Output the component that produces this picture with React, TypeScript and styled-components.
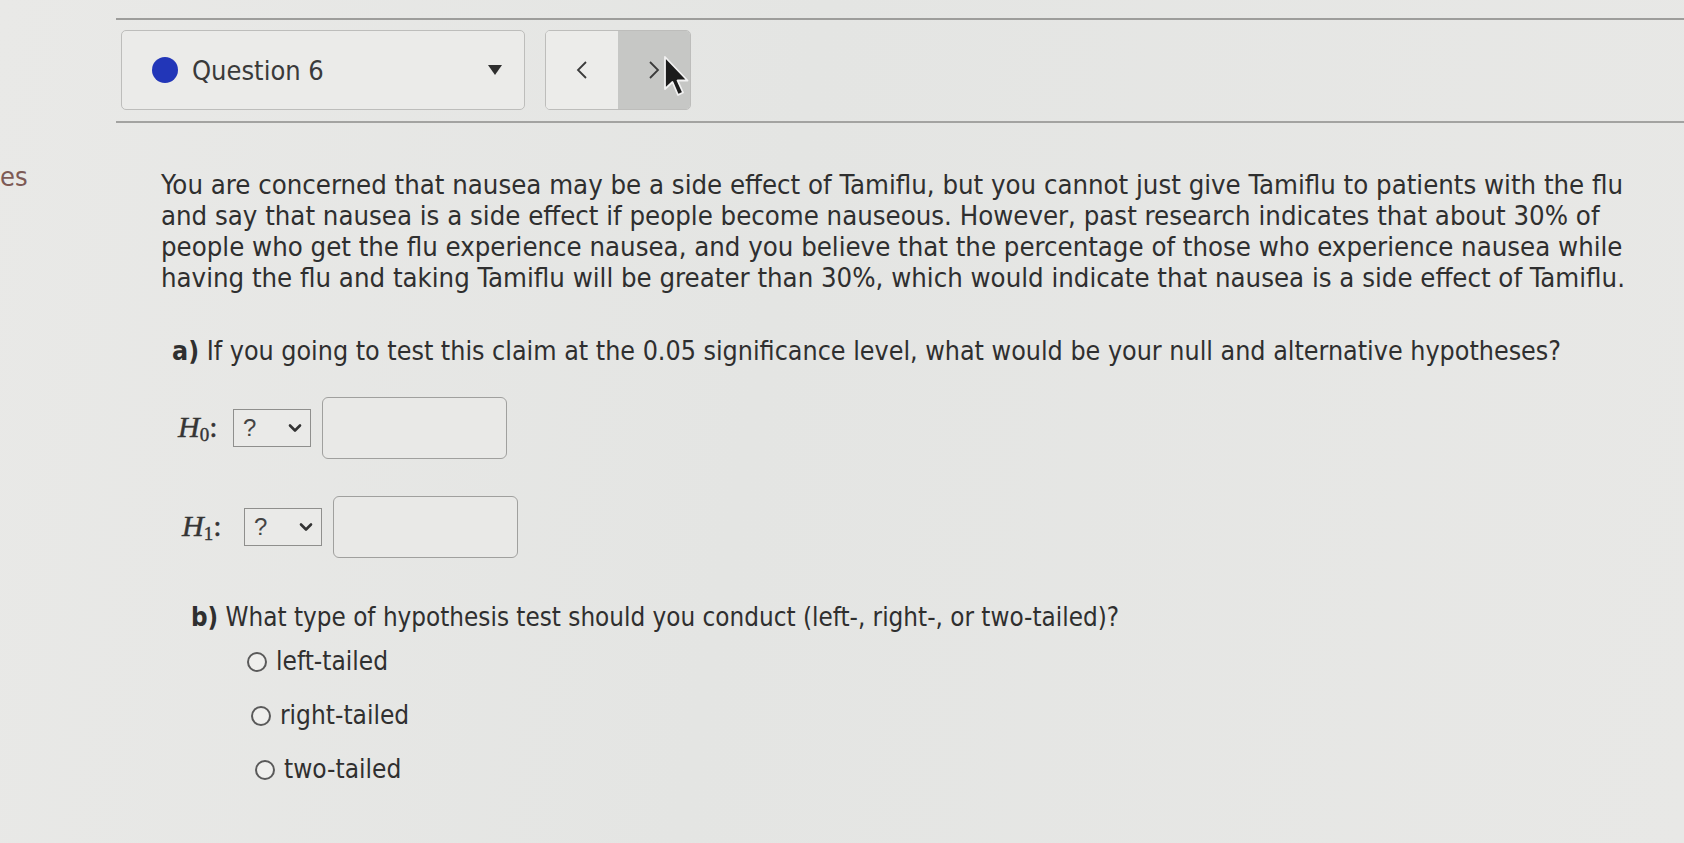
import React from 'react'
import styled, { createGlobalStyle } from 'styled-components'

const GlobalStyle = createGlobalStyle`
  html, body {
    margin: 0;
    padding: 0;
    background: #e7e7e5;
  }
  body {
    font-family: "DejaVu Sans Condensed", "DejaVu Sans", sans-serif;
    font-stretch: condensed;
    color: #333;
  }
`

const Page = styled.div`
  width: 1684px;
  height: 843px;
  overflow: hidden;
  background: linear-gradient(100deg, #e9e9e7 0%, #e4e5e3 45%, #e8e8e6 100%);
`

const Header = styled.div`
  margin: 18px 0 0 116px;
  border-top: 2px solid #9d9d9b;
  border-bottom: 2px solid #a3a3a1;
  padding: 10px 0 11px 5px;
  display: flex;
  align-items: center;
  gap: 20px;
`

const QuestionPicker = styled.div`
  width: 404px;
  height: 80px;
  box-sizing: border-box;
  border: 1.5px solid #bdbdbb;
  border-radius: 5px;
  background: #ebebe9;
  display: flex;
  align-items: center;
  padding: 0 22px 0 30px;
  gap: 14px;
`

const Dot = styled.span`
  width: 26px;
  height: 26px;
  border-radius: 50%;
  background: #2236b8;
  flex: none;
`

const PickerLabel = styled.span`
  flex: 1;
  font-size: 27px;
  color: #3a3a3a;
`

const Caret = styled.span`
  width: 0;
  height: 0;
  border-left: 7px solid transparent;
  border-right: 7px solid transparent;
  border-top: 10px solid #2e2e2e;
`

const NavGroup = styled.div`
  position: relative;
  width: 146px;
  height: 80px;
  box-sizing: border-box;
  border: 1.5px solid #bdbdbb;
  border-radius: 5px;
  display: flex;
`

const NavButton = styled.button<{ $active?: boolean }>`
  flex: 1;
  border: none;
  margin: 0;
  padding: 0;
  background: ${p => (p.$active ? '#c6c7c5' : '#ececea')};
  border-radius: ${p => (p.$active ? '0 4px 4px 0' : '4px 0 0 4px')};
  display: flex;
  align-items: center;
  justify-content: center;
`

const Arrow = styled.svg`
  width: 12px;
  height: 20px;
`

const Pointer = styled.svg`
  position: absolute;
  left: 117px;
  top: 24px;
  width: 28px;
  height: 44px;
`

const Body = styled.div`
  display: flex;
`

const Sidebar = styled.div`
  width: 161px;
  flex: none;
  padding-top: 38px;
  font-size: 27px;
  color: #7d5a55;
`

const Content = styled.div`
  padding-top: 46px;
  flex: 1;
`

const Paragraph = styled.p`
  margin: 0;
  font-size: 27.3px;
  line-height: 31px;
  white-space: nowrap;
  color: #2f2f2f;
`

const Part = styled.p<{ $indent: number; $size: number }>`
  margin: 0;
  padding-left: ${p => p.$indent}px;
  font-size: ${p => p.$size}px;
  line-height: 31px;
  white-space: nowrap;
  color: #2f2f2f;
  b {
    font-weight: bold;
  }
`

const HypRow = styled.div<{ $indent: number }>`
  display: flex;
  align-items: center;
  padding-left: ${p => p.$indent}px;
  height: 62px;
`

const MathLabel = styled.span`
  font-family: "Liberation Serif", "DejaVu Serif", serif;
  font-style: italic;
  font-size: 30px;
  color: #353535;
  -webkit-text-stroke: 0.4px #353535;
  sub {
    font-style: normal;
    font-size: 19px;
    vertical-align: -4px;
  }
  em {
    font-style: normal;
  }
`

const Select = styled.div`
  width: 78px;
  height: 38px;
  box-sizing: border-box;
  border: 1.5px solid #8f8f8d;
  background: #eaeae8;
  display: flex;
  align-items: center;
  justify-content: space-between;
  padding: 0 8px 0 9px;
  font-family: "Liberation Sans", Arial, sans-serif;
  font-size: 24px;
  color: #444;
  margin-right: 11px;
`

const Chevron = styled.svg`
  width: 14px;
  height: 10px;
`

const AnswerBox = styled.div`
  width: 185px;
  height: 62px;
  box-sizing: border-box;
  border: 1.5px solid #a0a09e;
  border-radius: 6px;
  background: #e9e9e7;
`

const Options = styled.div`
  display: flex;
  flex-direction: column;
  gap: 21px;
  margin-top: 12px;
`

const OptionRow = styled.label<{ $indent: number }>`
  display: flex;
  align-items: center;
  gap: 9px;
  padding-left: ${p => p.$indent}px;
  font-size: 26px;
  line-height: 33px;
  color: #303030;
`

const Radio = styled.span`
  width: 20px;
  height: 20px;
  box-sizing: border-box;
  border-radius: 50%;
  border: 2.5px solid #5a5a5a;
  background: #efefed;
`

const Hypothesis = ({ sub, indent, labelWidth }: { sub: string; indent: number; labelWidth: number }) => (
  <HypRow $indent={indent}>
    <MathLabel style={{ width: labelWidth }}>
      H<sub>{sub}</sub><em>:</em>
    </MathLabel>
    <Select>
      <span>?</span>
      <Chevron viewBox="0 0 14 10">
        <path d="M2 2.5 L7 7.5 L12 2.5" fill="none" stroke="#333" strokeWidth="2.6" strokeLinecap="round" strokeLinejoin="round" />
      </Chevron>
    </Select>
    <AnswerBox />
  </HypRow>
)

const options = [
  { label: 'left-tailed', indent: 86 },
  { label: 'right-tailed', indent: 90 },
  { label: 'two-tailed', indent: 94 },
]

export default function App() {
  return (
    <Page>
      <GlobalStyle />
      <Header>
        <QuestionPicker>
          <Dot />
          <PickerLabel>Question 6</PickerLabel>
          <Caret />
        </QuestionPicker>
        <NavGroup>
          <NavButton>
            <Arrow viewBox="0 0 12 20">
              <path d="M10 2 L2 10 L10 18" fill="none" stroke="#3a3a3a" strokeWidth="1.8" />
            </Arrow>
          </NavButton>
          <NavButton $active>
            <Arrow viewBox="0 0 12 20">
              <path d="M2 2 L10 10 L2 18" fill="none" stroke="#3a3a3a" strokeWidth="1.8" />
            </Arrow>
          </NavButton>
          <Pointer viewBox="0 0 28 44">
            <path d="M2 2 L2 34 L9.5 27 L15 40 L20 37.5 L14.5 25.5 L24.5 25.5 Z" fill="#1c1c1c" stroke="#f2f2f2" strokeWidth="1.8" strokeLinejoin="round" />
          </Pointer>
        </NavGroup>
      </Header>
      <Body>
        <Sidebar>es</Sidebar>
        <Content>
          <Paragraph>
            You are concerned that nausea may be a side effect of Tamiflu, but you cannot just give Tamiflu to patients with the flu
            <br />
            and say that nausea is a side effect if people become nauseous. However, past research indicates that about 30% of
            <br />
            people who get the flu experience nausea, and you believe that the percentage of those who experience nausea while
            <br />
            having the flu and taking Tamiflu will be greater than 30%, which would indicate that nausea is a side effect of Tamiflu.
          </Paragraph>
          <div style={{ height: 42 }} />
          <Part $indent={11} $size={26.6}>
            <b>a)</b> If you going to test this claim at the 0.05 significance level, what would be your null and alternative hypotheses?
          </Part>
          <div style={{ height: 31 }} />
          <Hypothesis sub="0" indent={17} labelWidth={55} />
          <div style={{ height: 37 }} />
          <Hypothesis sub="1" indent={21} labelWidth={62} />
          <div style={{ height: 44 }} />
          <Part $indent={30} $size={25.8}>
            <b>b)</b> What type of hypothesis test should you conduct (left-, right-, or two-tailed)?
          </Part>
          <Options>
            {options.map(o => (
              <OptionRow key={o.label} $indent={o.indent}>
                <Radio />
                {o.label}
              </OptionRow>
            ))}
          </Options>
        </Content>
      </Body>
    </Page>
  )
}
